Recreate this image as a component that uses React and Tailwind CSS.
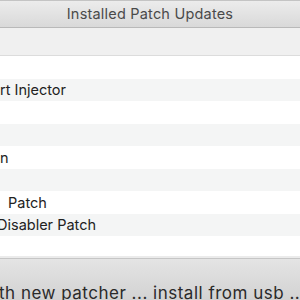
import React from "react";

const rows = [
  { text: "", indent: "", h: "h-[23px]" },
  { text: "rt Injector", indent: "pl-0", h: "h-[22px]" },
  { text: "", indent: "", h: "h-[23px]" },
  { text: "", indent: "", h: "h-[22px]" },
  { text: "n", indent: "pl-0", h: "h-[23px]" },
  { text: "", indent: "", h: "h-[22px]" },
  { text: "Patch", indent: "pl-[8px]", h: "h-[23px]" },
  { text: "Disabler Patch", indent: "-ml-[3px]", h: "h-[22px]" },
  { text: "", indent: "", h: "h-[20px]" },
];

export default function App() {
  return (
    <div className="w-[300px] h-[300px] overflow-hidden flex flex-col bg-white font-['Inter','Liberation_Sans',sans-serif]">
      <div className="h-[28px] shrink-0 flex items-center justify-center border-t border-b border-t-[#c4c4c4] border-b-[#b9b9b9] bg-gradient-to-b from-[#ececec] to-[#d9d9d9]">
        <span className="text-[14.5px] text-[#4a4a4a] tracking-[0.2px]">Installed Patch Updates</span>
      </div>
      <div className="h-[28px] shrink-0 bg-[#f0f0f0] border-b border-[#dcdcdc]" />
      <div className="flex flex-col shrink-0">
        {rows.map((row, i) => (
          <div
            key={i}
            className={`${row.h} shrink-0 flex items-center text-[14.5px] text-[#222] whitespace-nowrap ${
              i % 2 === 1 ? "bg-[#f4f5f5]" : "bg-white"
            }`}
          >
            <span className={row.indent}>{row.text}</span>
          </div>
        ))}
      </div>
      <div className="h-[3px] shrink-0 bg-[#ebebeb] border-b border-[#c6c6c6]" />
      <div className="flex-1 bg-gradient-to-b from-[#e4e4e4] to-[#d2d2d2] overflow-hidden pt-[26px]">
        <div className="-ml-[1px] text-[17px] leading-none text-[#2a2a2a] whitespace-nowrap tracking-[0.5px]">
          th new patcher ... install from usb ...
        </div>
      </div>
    </div>
  );
}
